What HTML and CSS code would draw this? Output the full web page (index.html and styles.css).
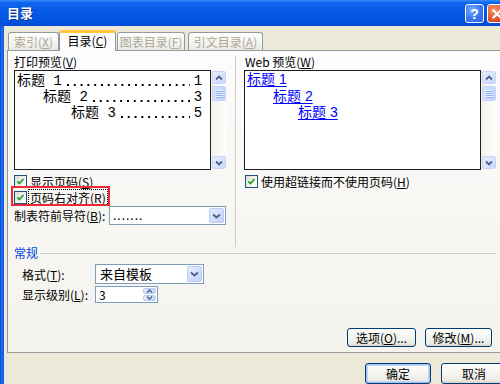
FILE: index.html
```html
<!DOCTYPE html>
<html lang="zh-CN">
<head>
<meta charset="utf-8">
<title>目录</title>
<link rel="stylesheet" href="styles.css">
</head>
<body>
<div class="window">
  <div class="titlebar">
    <span class="title">目录</span>
    <div class="tb-buttons">
      <span class="tb-btn help">?</span>
      <span class="tb-btn close"><svg width="10" height="10" viewBox="0 0 10 10"><path d="M1.5 1.5 L8.5 8.5 M8.5 1.5 L1.5 8.5" stroke="#fff" stroke-width="2.2" stroke-linecap="square"/></svg></span>
    </div>
  </div>
  <div class="frame">
    <div class="lborder"></div>
    <div class="client">
      <div class="tabs">
        <div class="tab disabled t1">索引(<u>X</u>)</div>
        <div class="tab active t2">目录(<u>C</u>)</div>
        <div class="tab disabled t3">图表目录(<u>F</u>)</div>
        <div class="tab disabled t4">引文目录(<u>A</u>)</div>
      </div>
      <div class="panel">
        <div class="columns">
          <div class="col left">
            <div class="label">打印预览(<u>V</u>)</div>
            <div class="listbox">
              <div class="list print">
                <div class="toc l1"><span>标题 1</span><span class="leader"></span><span>1</span></div>
                <div class="toc l2"><span>标题 2</span><span class="leader"></span><span>3</span></div>
                <div class="toc l3"><span>标题 3</span><span class="leader"></span><span>5</span></div>
              </div>
              <div class="vscroll">
                <span class="sbtn"><svg width="8" height="6" viewBox="0 0 8 6"><path d="M1 4.5 L4 1.5 L7 4.5" fill="none" stroke="#4D6185" stroke-width="1.8"/></svg></span>
                <span class="thumb"><i></i><i></i><i></i><i></i></span>
                <span class="track"></span>
                <span class="sbtn"><svg width="8" height="6" viewBox="0 0 8 6"><path d="M1 1.5 L4 4.5 L7 1.5" fill="none" stroke="#4D6185" stroke-width="1.8"/></svg></span>
              </div>
            </div>
            <div class="check-row first"><span class="checkbox"><svg width="9" height="9" viewBox="0 0 9 9"><path d="M1.5 4.5 L3.5 6.5 L7.5 2" fill="none" stroke="#21A121" stroke-width="1.8"/></svg></span><span>显示页码(<u>S</u>)</span></div>
            <div class="check-row marked"><span class="checkbox"><svg width="9" height="9" viewBox="0 0 9 9"><path d="M1.5 4.5 L3.5 6.5 L7.5 2" fill="none" stroke="#21A121" stroke-width="1.8"/></svg></span><span class="focus">页码右对齐(<u>R</u>)</span><span class="redbox"></span></div>
            <div class="leader-row"><span>制表符前导符(<u>B</u>):</span>
              <div class="combo leader-combo"><span class="ctext">.......</span><span class="cbtn"><svg width="9" height="6" viewBox="0 0 9 6"><path d="M1 1.5 L4.5 4.5 L8 1.5" fill="none" stroke="#4D6185" stroke-width="1.8"/></svg></span></div>
            </div>
          </div>
          <div class="vsep"></div>
          <div class="col right">
            <div class="label web">Web 预览(<u>W</u>)</div>
            <div class="listbox">
              <div class="list web">
                <div class="wl w1"><a>标题 1</a></div>
                <div class="wl w2"><a>标题 2</a></div>
                <div class="wl w3"><a>标题 3</a></div>
              </div>
              <div class="vscroll">
                <span class="sbtn"><svg width="8" height="6" viewBox="0 0 8 6"><path d="M1 4.5 L4 1.5 L7 4.5" fill="none" stroke="#4D6185" stroke-width="1.8"/></svg></span>
                <span class="thumb"><i></i><i></i><i></i><i></i></span>
                <span class="track"></span>
                <span class="sbtn"><svg width="8" height="6" viewBox="0 0 8 6"><path d="M1 1.5 L4 4.5 L7 1.5" fill="none" stroke="#4D6185" stroke-width="1.8"/></svg></span>
              </div>
            </div>
            <div class="check-row first web-check"><span class="checkbox"><svg width="9" height="9" viewBox="0 0 9 9"><path d="M1.5 4.5 L3.5 6.5 L7.5 2" fill="none" stroke="#21A121" stroke-width="1.8"/></svg></span><span>使用超链接而不使用页码(<u>H</u>)</span></div>
          </div>
        </div>
        <div class="group-head"><span class="gtitle">常规</span><span class="gline"></span></div>
        <div class="form-row first"><span class="flabel">格式(<u>T</u>):</span>
          <div class="combo format-combo"><span class="ctext">来自模板</span><span class="cbtn"><svg width="9" height="6" viewBox="0 0 9 6"><path d="M1 1.5 L4.5 4.5 L8 1.5" fill="none" stroke="#4D6185" stroke-width="1.8"/></svg></span></div>
        </div>
        <div class="form-row second"><span class="flabel">显示级别(<u>L</u>):</span>
          <div class="spin"><span class="ctext">3</span><span class="spinbtns"><span class="sp"><svg width="7" height="4" viewBox="0 0 7 4"><path d="M1 3.5 L3.5 1 L6 3.5" fill="none" stroke="#4D6185" stroke-width="1.4"/></svg></span><span class="sp"><svg width="7" height="4" viewBox="0 0 7 4"><path d="M1 0.5 L3.5 3 L6 0.5" fill="none" stroke="#4D6185" stroke-width="1.4"/></svg></span></span></div>
        </div>
        <div class="panel-buttons">
          <span class="btn opt">选项(<u>O</u>)...</span>
          <span class="btn mod">修改(<u>M</u>)...</span>
        </div>
      </div>
      <div class="footer">
        <span class="btn default">确定</span>
        <span class="btn">取消</span>
      </div>
    </div>
  </div>
</div>
</body>
</html>
```

FILE: styles.css
```css
* { box-sizing: border-box; }
html, body { margin: 0; padding: 0; }
body {
  width: 500px;
  height: 384px;
  overflow: hidden;
  background: #ECE9D8;
  font-family: "Noto Sans CJK SC", "Noto Sans", sans-serif;
  font-size: 12px;
  color: #000;
}
u { text-decoration: underline; text-underline-offset: 1px; }

.window {
  width: 512px;
  height: 384px;
  display: flex;
  flex-direction: column;
}

/* title bar */
.titlebar {
  height: 26px;
  flex: none;
  display: flex;
  align-items: center;
  padding: 0 6px 0 7px;
  background: linear-gradient(to bottom, #3C8DF8 0%, #0E66EC 10%, #0659E6 40%, #0055E2 75%, #004CD4 100%);
}
.title {
  color: #fff;
  font-weight: bold;
  font-size: 13px;
  line-height: 16px;
  text-shadow: 1px 1px 0 #0A2A8A;
}
.tb-buttons { margin-left: auto; display: flex; gap: 3px; margin-top: 1px; }
.tb-btn {
  width: 19px;
  height: 19px;
  border: 1px solid #fff;
  border-radius: 3px;
  display: flex;
  align-items: center;
  justify-content: center;
  color: #fff;
  font-family: "Liberation Sans", sans-serif;
  font-weight: bold;
  font-size: 14px;
  line-height: 1;
}
.help { background: radial-gradient(circle at 35% 30%, #7CAEF9 0%, #3E7CF2 50%, #2A62E0 100%); }
.close { background: radial-gradient(circle at 35% 30%, #F29A74 0%, #E2592E 55%, #C8401C 100%); }

/* frame */
.frame { flex: 1; display: flex; }
.lborder {
  width: 4px;
  flex: none;
  background: linear-gradient(to right, #0A4BD6 0%, #1E6FF0 50%, #0B55DF 100%);
}
.client {
  flex: 1;
  background: #ECE9D8;
  padding: 4px 4px 0 3px;
  display: flex;
  flex-direction: column;
}

/* tabs */
.tabs {
  height: 20px;
  display: flex;
  align-items: flex-end;
}
.tab {
  height: 18px;
  border: 1px solid #919B9C;
  border-bottom: none;
  border-radius: 3px 3px 0 0;
  background: linear-gradient(to bottom, #FFFFFF 0%, #F3F3EF 60%, #E9E8E1 100%);
  display: flex;
  align-items: center;
  justify-content: center;
  line-height: 14px;
  white-space: nowrap;
}
.tab.disabled { color: #ACA899; }
.t1 { width: 51px; margin-left: 1px; }
.t2 {
  width: 57px;
  height: 21px;
  margin-bottom: -1px;
  position: relative;
  background: #FCFCFE;
  border-top: 3px solid #FFC83C;
  padding-bottom: 2px;
}
.t3 { width: 68px; margin-left: 1px; }
.t4 { width: 75px; margin-left: 3px; }

/* panel */
.panel {
  width: 497px;
  height: 303px;
  flex: none;
  border: 1px solid #919B9C;
  background: linear-gradient(to bottom, #FCFCFE 0%, #F7F6F2 60%, #F4F3EE 100%);
  padding: 4px 7px 0 6px;
  display: flex;
  flex-direction: column;
}
.columns {
  height: 191px;
  display: flex;
}
.col.left { width: 212px; }
.vsep {
  width: 1px;
  margin: 1px 8px 0 9px;
  background: #D0D0BF;
  height: 191px;
}
.col.right { width: 252px; }
.label { height: 14px; line-height: 14px; white-space: nowrap; }
.label.web { padding-left: 1px; }

.listbox {
  margin-top: 1px;
  height: 100px;
  display: flex;
}
.list {
  height: 100px;
  background: #fff;
  border: 1px solid #1E1E1E;
  font-family: "Liberation Mono", "Noto Sans CJK SC", monospace;
  font-size: 14px;
}
.list.print { width: 198px; padding: 2px 8px 0 0; }
.list.web { width: 237px; padding-top: 0; font-family: "Liberation Sans", "Noto Sans CJK SC", sans-serif; }
.toc { display: flex; height: 16px; line-height: 16px; white-space: nowrap; }
.toc.l1 { padding-left: 2px; }
.toc.l2 { padding-left: 28px; }
.toc.l3 { padding-left: 56px; }
.leader {
  flex: 1;
  margin: 0 4px 0 4px;
  background-image: radial-gradient(circle at 1px 1px, #000 0.9px, transparent 1.3px);
  background-size: 6.8px 2px;
  background-repeat: repeat-x;
  background-position: 1px 11px;
}
.wl { height: 16.5px; line-height: 16.5px; white-space: nowrap; }
.wl a { color: #0000FF; text-decoration: underline; text-underline-offset: 2px; }
.w1 { padding-left: 2px; }
.w2 { padding-left: 28px; }
.w3 { padding-left: 53px; }

/* scrollbar */
.vscroll {
  width: 15px;
  height: 100px;
  padding: 1px 0 1px 1px;
  background: linear-gradient(to right, #F3F1EC, #FEFEFB);
  display: flex;
  flex-direction: column;
}
.sbtn {
  height: 13px;
  border: 1px solid #C6D5F8;
  border-radius: 2px;
  background: linear-gradient(135deg, #E7EEFD 0%, #C9D8FC 100%);
  display: flex;
  align-items: center;
  justify-content: center;
}
.thumb {
  margin-top: 2px;
  height: 15px;
  border: 1px solid #C6D5F8;
  border-radius: 2px;
  background: linear-gradient(to right, #D5E1FC, #C4D4FB);
  display: flex;
  flex-direction: column;
  align-items: center;
  justify-content: center;
  gap: 1px;
}
.thumb i { display: block; width: 7px; background: #EEF3FE; border-bottom: 1px solid #8CB0F8; height: 2px; }
.thumb i + i { margin-top: -1px; }
.track { flex: 1; }

/* checkboxes */
.check-row {
  display: flex;
  align-items: center;
  height: 13px;
  line-height: 13px;
  white-space: nowrap;
}
.check-row.first { margin-top: 5px; }
.check-row.marked { margin-top: 3px; position: relative; }
.checkbox {
  width: 13px;
  height: 13px;
  flex: none;
  margin-right: 3px;
  border: 1px solid #1C5180;
  background: linear-gradient(135deg, #DCDCD7 0%, #F4F4F0 60%, #FFFFFF 100%);
  display: flex;
  align-items: center;
  justify-content: center;
}
.web-check { padding-left: 1px; }
.focus {
  outline: 1px dotted #000;
  outline-offset: 1px;
}
.redbox {
  position: absolute;
  left: -3px;
  top: -5px;
  width: 99px;
  height: 20px;
  border: 2px solid #EE2A36;
}

/* combos */
.leader-row {
  margin-top: 2px;
  display: flex;
  align-items: center;
  white-space: nowrap;
}
.combo {
  display: flex;
  align-items: stretch;
  background: #fff;
  border: 1px solid #7F9DB9;
  padding: 1px;
}
.leader-combo { margin-left: auto; width: 117px; height: 19px; }
.ctext { flex: 1; padding-left: 2px; line-height: 15px; }
.leader-combo .ctext { letter-spacing: 1px; line-height: 13px; }
.cbtn {
  width: 15px;
  border: 1px solid #BACCF6;
  border-radius: 2px;
  background: linear-gradient(135deg, #E4ECFD 0%, #C3D4FB 100%);
  display: flex;
  align-items: center;
  justify-content: center;
}

/* general group */
.group-head {
  height: 14px;
  display: flex;
  align-items: center;
}
.gtitle { color: #0046D5; line-height: 14px; }
.gline { flex: 1; height: 1px; margin-left: 2px; margin-top: 1px; background: #D0D0BF; }

.form-row {
  display: flex;
  align-items: center;
  padding-left: 8px;
  white-space: nowrap;
}
.form-row.first { margin-top: 4px; }
.form-row.second { margin-top: 2px; }
.flabel { width: 73px; }
.format-combo { width: 109px; height: 20px; }
.format-combo .ctext { font-size: 13px; line-height: 16px; padding-left: 3px; }
.spin {
  width: 63px;
  height: 17px;
  display: flex;
  background: #fff;
  border: 1px solid #7F9DB9;
  padding: 1px;
}
.spin .ctext { line-height: 13px; }
.spinbtns { width: 13px; display: flex; flex-direction: column; gap: 1px; }
.sp {
  flex: 1;
  border: 1px solid #BACCF6;
  border-radius: 2px;
  background: linear-gradient(135deg, #E4ECFD 0%, #C3D4FB 100%);
  display: flex;
  align-items: center;
  justify-content: center;
}

/* buttons */
.panel-buttons {
  margin-top: 25px;
  display: flex;
  justify-content: flex-end;
  gap: 9px;
  padding-right: 4px;
}
.btn {
  height: 19px;
  border: 1px solid #003C74;
  border-radius: 3px;
  background: linear-gradient(to bottom, #FFFFFF 0%, #F4F4F0 50%, #ECEBE6 85%, #D6D0C5 100%);
  display: flex;
  align-items: center;
  justify-content: center;
  white-space: nowrap;
  line-height: 14px;
}
.opt { width: 69px; }
.mod { width: 67px; }
.footer {
  margin-top: 10px;
  display: flex;
  justify-content: flex-end;
  gap: 10px;
  padding-right: 1px;
}
.footer .btn { width: 66px; height: 21px; }
.btn.default { box-shadow: inset 0 0 0 1px #A9C1F3, inset 0 0 0 2px #C5D5F7; }
```
